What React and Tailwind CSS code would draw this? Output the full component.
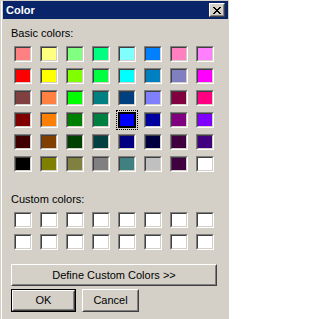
import React from "react";

const BASIC = [
  ["bg-[#ff8080]", "bg-[#ffff80]", "bg-[#80ff80]", "bg-[#00ff80]", "bg-[#80ffff]", "bg-[#0080ff]", "bg-[#ff80c0]", "bg-[#ff80ff]"],
  ["bg-[#ff0000]", "bg-[#ffff00]", "bg-[#80ff00]", "bg-[#00ff40]", "bg-[#00ffff]", "bg-[#0080c0]", "bg-[#8080c0]", "bg-[#ff00ff]"],
  ["bg-[#804040]", "bg-[#ff8040]", "bg-[#00ff00]", "bg-[#008080]", "bg-[#004080]", "bg-[#8080ff]", "bg-[#800040]", "bg-[#ff0080]"],
  ["bg-[#800000]", "bg-[#ff8000]", "bg-[#008000]", "bg-[#008040]", "bg-[#0000ff]", "bg-[#0000a0]", "bg-[#800080]", "bg-[#8000ff]"],
  ["bg-[#400000]", "bg-[#804000]", "bg-[#004000]", "bg-[#004040]", "bg-[#000080]", "bg-[#000040]", "bg-[#400040]", "bg-[#400080]"],
  ["bg-[#000000]", "bg-[#808000]", "bg-[#808040]", "bg-[#808080]", "bg-[#408080]", "bg-[#c0c0c0]", "bg-[#400040]", "bg-[#ffffff]"],
];

function Swatch({ bg, selected }) {
  if (selected) {
    return (
      <div className="relative w-[18px] h-[16px] border-2 border-black">
        <div className={`w-full h-full ${bg}`} />
        <div className="absolute -inset-[4px] border border-dotted border-black" />
      </div>
    );
  }
  return (
    <div className="w-[18px] h-[16px] border border-t-[#808080] border-l-[#808080] border-b-white border-r-white">
      <div
        className={`w-full h-full border border-t-[#404040] border-l-[#404040] border-b-[#d4d0c8] border-r-[#d4d0c8] ${bg}`}
      />
    </div>
  );
}

function Raised({ className = "", children }) {
  return (
    <div className={`border border-t-white border-l-white border-b-[#404040] border-r-[#404040] ${className}`}>
      <div className="w-full h-full border border-t-[#d4d0c8] border-l-[#d4d0c8] border-b-[#808080] border-r-[#808080] flex items-center justify-center">
        {children}
      </div>
    </div>
  );
}

function CloseGlyph() {
  const px = [
    [0, 0], [1, 0], [6, 0], [7, 0],
    [1, 1], [2, 1], [5, 1], [6, 1],
    [2, 2], [3, 2], [4, 2], [5, 2],
    [3, 3], [4, 3],
    [2, 4], [3, 4], [4, 4], [5, 4],
    [1, 5], [2, 5], [5, 5], [6, 5],
    [0, 6], [1, 6], [6, 6], [7, 6],
  ];
  return (
    <svg width="8" height="7" viewBox="0 0 8 7" shapeRendering="crispEdges">
      {px.map(([x, y], i) => (
        <rect key={i} x={x} y={y} width="1" height="1" fill="#000" />
      ))}
    </svg>
  );
}

export default function App() {
  return (
    <div
      className="w-[229px] h-[319px] bg-[#d4d0c8] pt-[1px] pl-[1px] overflow-hidden text-black text-[11px] leading-[13px]"
      style={{ fontFamily: '"Liberation Sans", Arial, sans-serif' }}
    >
      <div className="h-full border-l border-white pl-[1px] flex flex-col">
        {/* caption */}
        <div className="h-[18px] bg-[#0a246a] mr-[1px] flex items-center justify-between pl-[3px] pr-[3px]">
          <span className="text-white font-bold text-[11px]">Color</span>
          <Raised className="w-[16px] h-[14px] bg-[#d4d0c8]">
            <CloseGlyph />
          </Raised>
        </div>

        <div className="flex flex-col pl-[8px]">
          <div className="mt-[8px]">Basic colors:</div>
          <div className="mt-[6px] ml-[3px] grid grid-cols-[repeat(8,18px)] gap-x-[8px] gap-y-[6px]">
            {BASIC.map((row, r) =>
              row.map((bg, c) => (
                <Swatch key={`${r}-${c}`} bg={bg} selected={r === 3 && c === 4} />
              ))
            )}
          </div>

          <div className="mt-[21px]">Custom colors:</div>
          <div className="mt-[6px] ml-[3px] grid grid-cols-[repeat(8,18px)] gap-x-[8px] gap-y-[6px]">
            {Array.from({ length: 16 }).map((_, i) => (
              <Swatch key={i} bg="bg-white" />
            ))}
          </div>

          <Raised className="mt-[14px] w-[206px] h-[22px]">
            <span>Define Custom Colors &gt;&gt;</span>
          </Raised>

          <div className="mt-[3px] flex gap-[6px]">
            <div className="w-[65px] h-[23px] border border-black">
              <Raised className="w-full h-full">
                <span>OK</span>
              </Raised>
            </div>
            <Raised className="w-[57px] h-[23px]">
              <span>Cancel</span>
            </Raised>
          </div>
        </div>
      </div>
    </div>
  );
}
